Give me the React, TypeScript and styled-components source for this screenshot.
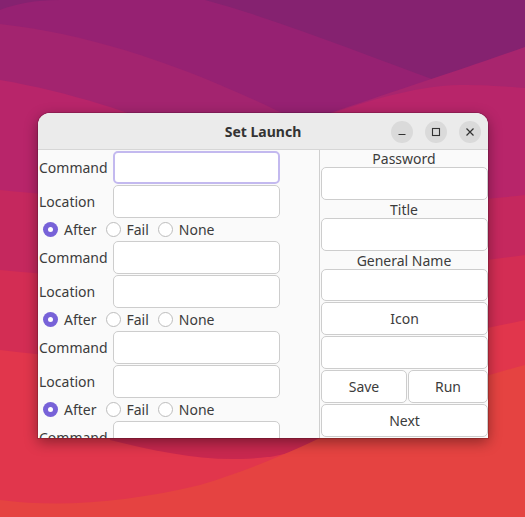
import React from 'react';
import styled, { createGlobalStyle, css } from 'styled-components';

const GlobalStyle = createGlobalStyle`
    html, body {
        margin: 0;
        padding: 0;
    }
    body {
        font-family: "Noto Sans", "Open Sans", sans-serif;
        font-size: 14px;
        color: #3c3c3c;
    }
`;

const Desktop = styled.div`
    position: relative;
    width: 525px;
    height: 517px;
    overflow: hidden;
    box-sizing: border-box;
    padding: 113px 0 0 38px;
    background: #852270;
`;

const Wallpaper = styled.svg`
    position: absolute;
    left: 0;
    top: 0;
    width: 525px;
    height: 517px;
`;

const Window = styled.div`
    position: relative;
    width: 450px;
    height: 325px;
    display: flex;
    flex-direction: column;
    border-radius: 12px 12px 0 0;
    overflow: hidden;
    background: #fafafa;
    box-shadow: 0 0 0 1px rgba(0, 0, 0, 0.14), 0 4px 14px rgba(0, 0, 0, 0.4);
`;

const TitleBar = styled.div`
    height: 36px;
    flex-shrink: 0;
    display: grid;
    grid-template-columns: 1fr auto 1fr;
    align-items: center;
    background: #ebebeb;
    border-bottom: 1px solid #d6d6d6;
`;

const Title = styled.div`
    grid-column: 2;
    font-weight: bold;
    font-size: 14px;
    color: #333;
`;

const Controls = styled.div`
    grid-column: 3;
    justify-self: end;
    display: flex;
    gap: 12px;
    padding-right: 7px;
    padding-top: 2px;
`;

const ControlButton = styled.div`
    width: 22px;
    height: 22px;
    border-radius: 50%;
    background: #dadada;
    display: flex;
    align-items: center;
    justify-content: center;
`;

const Body = styled.div`
    flex: 1;
    min-height: 0;
    display: flex;
`;

const LeftPane = styled.div`
    width: 281px;
    flex-shrink: 0;
    overflow: hidden;
    background: #fafafa;
    border-right: 1px solid #cfcfcf;
`;

const FieldRow = styled.div`
    height: 34px;
    display: flex;
    align-items: center;
`;

const RowLabel = styled.div`
    width: 74px;
    padding-left: 1px;
    flex-shrink: 0;
`;

const TextField = styled.input<{ $focused?: boolean }>`
    box-sizing: border-box;
    width: 167px;
    height: 33px;
    margin: 1px 0 0;
    padding: 0 8px;
    background: #fff;
    border: 1px solid #cdcdcd;
    border-radius: 5px;
    outline: none;
    font: inherit;
    ${(p) =>
        p.$focused &&
        css`
            border: 2px solid #c3b9ef;
        `}
`;

const RadioRow = styled.div`
    height: 22px;
    display: flex;
    align-items: center;
    gap: 9px;
    padding-left: 5px;
`;

const RadioOption = styled.label`
    display: flex;
    align-items: center;
    gap: 6px;
`;

const RadioDot = styled.span<{ $checked?: boolean }>`
    box-sizing: border-box;
    width: 15px;
    height: 15px;
    border-radius: 50%;
    background: #fff;
    border: 1px solid #bdbdbd;
    display: flex;
    align-items: center;
    justify-content: center;
    ${(p) =>
        p.$checked &&
        css`
            background: #7762d8;
            border: none;
            &::after {
                content: '';
                width: 5px;
                height: 5px;
                border-radius: 50%;
                background: #fff;
            }
        `}
`;

const RightPane = styled.div`
    flex: 1;
    display: flex;
    flex-direction: column;
    background: #fafafa;
`;

const FieldLabel = styled.div`
    height: 17px;
    line-height: 17px;
    text-align: center;
`;

const WideField = styled.input`
    box-sizing: border-box;
    width: 167px;
    height: 33px;
    margin: 0 0 1px 1px;
    padding: 0 8px;
    background: #fff;
    border: 1px solid #cdcdcd;
    border-radius: 5px;
    outline: none;
    font: inherit;
`;

const Button = styled.button`
    box-sizing: border-box;
    height: 33px;
    padding: 0;
    background: #fff;
    border: 1px solid #cdcdcd;
    border-radius: 5px;
    font: inherit;
    color: #3c3c3c;
`;

const WideButton = styled(Button)`
    width: 167px;
    margin: 0 0 1px 1px;
`;

const ButtonPair = styled.div`
    width: 167px;
    margin: 0 0 1px 1px;
    display: grid;
    grid-template-columns: 86px 1fr;
    gap: 1px;
`;

const LaunchBlock = ({ first }: { first?: boolean }) => (
    <>
        <FieldRow>
            <RowLabel>Command</RowLabel>
            <TextField $focused={first} />
        </FieldRow>
        <FieldRow>
            <RowLabel>Location</RowLabel>
            <TextField />
        </FieldRow>
        <RadioRow>
            <RadioOption><RadioDot $checked />After</RadioOption>
            <RadioOption><RadioDot />Fail</RadioOption>
            <RadioOption><RadioDot />None</RadioOption>
        </RadioRow>
    </>
);

const App = () => {
    return (
        <>
            <GlobalStyle />
            <Desktop>
                <Wallpaper viewBox="0 0 525 517">
                    <rect width="525" height="517" fill="#852270" />
                    <path d="M0,10 C15,4 35,0 60,0 L205,0 C285,22 365,55 440,82 C470,92 500,102 525,112 L525,517 L0,517 Z" fill="#962172" />
                    <path d="M0,24 C90,34 180,64 280,112 C320,132 340,150 360,170 L0,517 Z" fill="#a3246f" />
                    <path d="M330,113 C380,96 460,70 525,47 L525,517 L330,517 Z" fill="#a8256e" />
                    <path d="M0,80 C70,92 130,112 200,140 L200,517 L0,517 Z" fill="#b8256a" />
                    <path d="M333,113 C380,97 420,86 460,85 C490,85 510,87 525,88 L525,517 L333,517 Z" fill="#b8256a" />
                    <path d="M0,190 C150,205 350,215 525,195 L525,517 L0,517 Z" fill="#c5285e" />
                    <path d="M0,270 C150,285 350,280 525,255 L525,517 L0,517 Z" fill="#d32d54" />
                    <path d="M0,350 C150,370 350,360 525,320 L525,517 L0,517 Z" fill="#e1364c" />
                    <path d="M110,430 L330,430 C315,448 285,458 240,459 C195,460 150,450 110,440 Z" fill="#c8284f" />
                    <path d="M0,500 C60,508 130,502 200,485 C250,470 290,452 320,438 C380,410 450,385 525,365 L525,517 L0,517 Z" fill="#e54341" />
                </Wallpaper>
                <Window>
                    <TitleBar>
                        <Title>Set Launch</Title>
                        <Controls>
                            <ControlButton>
                                <svg width="10" height="10" viewBox="0 0 10 10">
                                    <line x1="1.5" y1="7.5" x2="8.5" y2="7.5" stroke="#333" strokeWidth="1.2" />
                                </svg>
                            </ControlButton>
                            <ControlButton>
                                <svg width="10" height="10" viewBox="0 0 10 10">
                                    <rect x="1.5" y="1.5" width="7" height="7" fill="none" stroke="#333" strokeWidth="1.1" />
                                </svg>
                            </ControlButton>
                            <ControlButton>
                                <svg width="10" height="10" viewBox="0 0 10 10">
                                    <path d="M1.5,1.5 L8.5,8.5 M8.5,1.5 L1.5,8.5" stroke="#333" strokeWidth="1.2" />
                                </svg>
                            </ControlButton>
                        </Controls>
                    </TitleBar>
                    <Body>
                        <LeftPane>
                            <LaunchBlock first />
                            <LaunchBlock />
                            <LaunchBlock />
                            <FieldRow>
                                <RowLabel>Command</RowLabel>
                                <TextField />
                            </FieldRow>
                        </LeftPane>
                        <RightPane>
                            <FieldLabel>Password</FieldLabel>
                            <WideField type="password" />
                            <FieldLabel>Title</FieldLabel>
                            <WideField />
                            <FieldLabel>General Name</FieldLabel>
                            <WideField />
                            <WideButton>Icon</WideButton>
                            <WideField />
                            <ButtonPair>
                                <Button>Save</Button>
                                <Button>Run</Button>
                            </ButtonPair>
                            <WideButton>Next</WideButton>
                        </RightPane>
                    </Body>
                </Window>
            </Desktop>
        </>
    );
};

export default App;
